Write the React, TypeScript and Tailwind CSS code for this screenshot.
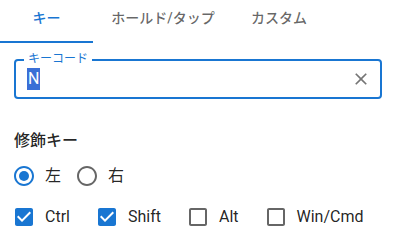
import React from 'react';

const font = { fontFamily: 'Roboto, "Noto Sans CJK JP", sans-serif' };

function RadioIcon({ checked }: { checked: boolean }) {
  return (
    <svg width="24" height="24" viewBox="0 0 24 24" className="shrink-0">
      <path
        fill={checked ? '#1976d2' : 'rgba(0,0,0,0.6)'}
        d="M12 2C6.48 2 2 6.48 2 12s4.48 10 10 10 10-4.48 10-10S17.52 2 12 2zm0 18c-4.42 0-8-3.58-8-8s3.58-8 8-8 8 3.58 8 8-3.58 8-8 8z"
      />
      {checked && <circle cx="12" cy="12" r="5" fill="#1976d2" />}
    </svg>
  );
}

function CheckIcon({ checked }: { checked: boolean }) {
  return (
    <svg width="24" height="24" viewBox="0 0 24 24" className="shrink-0">
      {checked ? (
        <path
          fill="#1976d2"
          d="M19 3H5c-1.11 0-2 .9-2 2v14c0 1.1.89 2 2 2h14c1.11 0 2-.9 2-2V5c0-1.1-.89-2-2-2zm-9 14l-5-5 1.41-1.41L10 14.17l7.59-7.59L19 8l-9 9z"
        />
      ) : (
        <path
          fill="rgba(0,0,0,0.6)"
          d="M19 5v14H5V5h14m0-2H5c-1.1 0-2 .9-2 2v14c0 1.1.9 2 2 2h14c1.1 0 2-.9 2-2V5c0-1.1-.9-2-2-2z"
        />
      )}
    </svg>
  );
}

const modifiers = [
  { label: 'Ctrl', checked: true },
  { label: 'Shift', checked: true },
  { label: 'Alt', checked: false },
  { label: 'Win/Cmd', checked: false },
];

export default function App() {
  return (
    <div className="w-[393px] h-[240px] bg-white overflow-hidden" style={font}>
      {/* tabs */}
      <div className="flex h-[43px] text-[14px] font-medium">
        <div className="w-[93px] flex justify-center pt-[8px] border-b-2 border-[#1976d2] text-[#1976d2]">
          <span className="leading-[20px]">キー</span>
        </div>
        <div className="w-[140px] flex justify-center pt-[8px] text-[rgba(0,0,0,0.6)]">
          <span className="leading-[20px]">ホールド/タップ</span>
        </div>
        <div className="w-[92px] flex justify-center pt-[8px] text-[rgba(0,0,0,0.6)]">
          <span className="leading-[20px]">カスタム</span>
        </div>
      </div>

      <div className="pl-[14px] pr-[11px]">
        {/* key code field */}
        <div className="relative mt-[16px] h-10 border-2 border-[#1976d2] rounded-[4px]">
          <span className="absolute -top-[10px] left-[8px] px-[4px] bg-white text-[12px] leading-4 text-[#1976d2]">
            キーコード
          </span>
          <div className="flex items-center h-full pl-[11px] pr-[9px]">
            <div className="flex-1 text-[16px]">
              <span className="bg-[#3a6fd6] text-white leading-[22px] inline-block px-[1px]">N</span>
            </div>
            <svg width="20" height="20" viewBox="0 0 24 24">
              <path
                fill="#757575"
                d="M19 6.41 17.59 5 12 10.59 6.41 5 5 6.41 10.59 12 5 17.59 6.41 19 12 13.41 17.59 19 19 17.59 13.41 12z"
              />
            </svg>
          </div>
        </div>

        {/* modifiers */}
        <div className="mt-[30px] text-[16px] leading-6 font-medium text-[rgba(0,0,0,0.87)]">修飾キー</div>

        <div className="mt-[11px] flex items-center -ml-[2px] text-[16px] text-[rgba(0,0,0,0.87)]">
          <div className="flex items-center gap-[9px]">
            <RadioIcon checked />
            <span className="leading-6">左</span>
          </div>
          <div className="flex items-center gap-[9px] ml-[14px]">
            <RadioIcon checked={false} />
            <span className="leading-6">右</span>
          </div>
        </div>

        <div className="mt-[17px] flex items-center -ml-[2px] text-[16px] text-[rgba(0,0,0,0.87)] gap-[25px]">
          {modifiers.map((m) => (
            <div key={m.label} className="flex items-center gap-[9px]">
              <CheckIcon checked={m.checked} />
              <span className="leading-6">{m.label}</span>
            </div>
          ))}
        </div>
      </div>
    </div>
  );
}
